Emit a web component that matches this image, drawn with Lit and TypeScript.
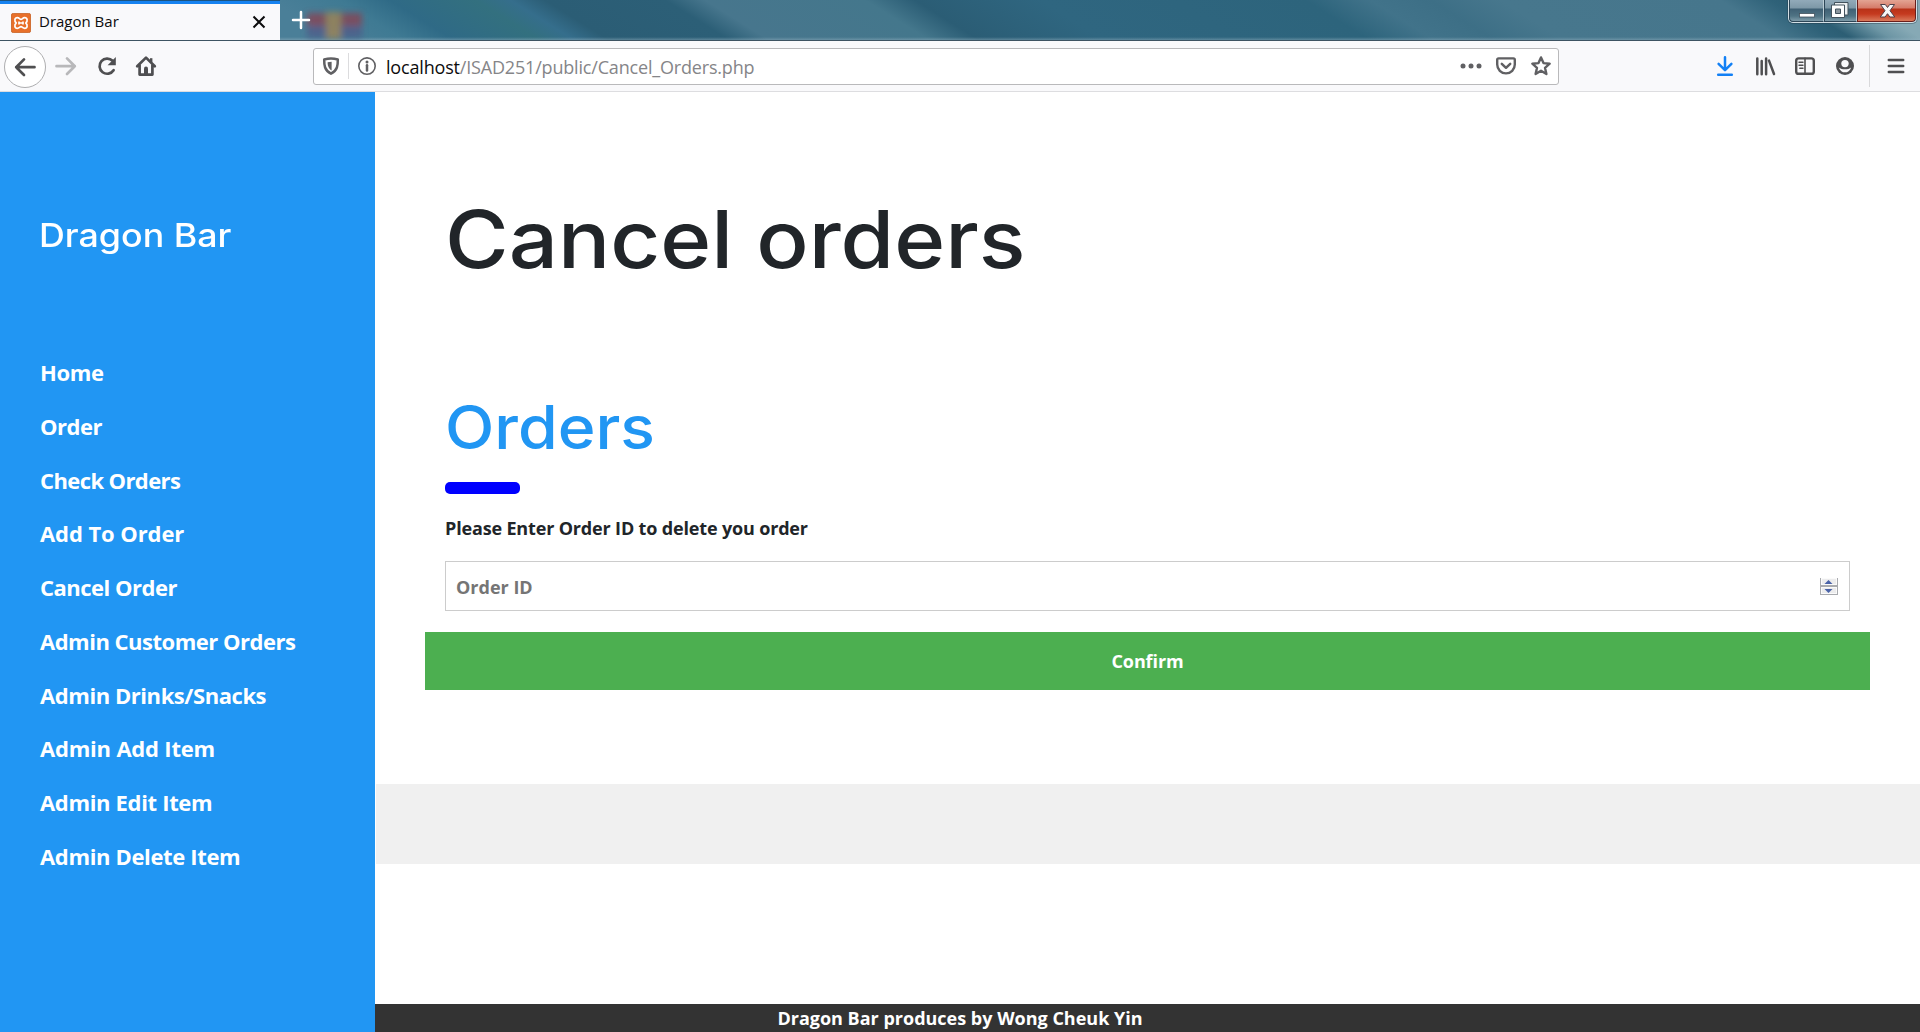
import { LitElement, html, css, svg, TemplateResult } from "lit";
import { customElement, property } from "lit/decorators.js";

const ICONS: Record<string, TemplateResult> = {
  back: svg`<path d="M21.5 12.2H3.2M11 4.4l-7.8 7.8 7.8 7.8" class="s w3"/>`,
  forward: svg`<path d="M2.5 12.2h18.3M13 4.4l7.8 7.8-7.8 7.8" class="s w3"/>`,
  reload: svg`<path d="M18.6 16.2A7.6 7.6 0 1 1 17.6 6.8" class="s w3"/><path d="M20.8 3v8.2h-8.2z" class="f"/>`,
  home: svg`<path d="M3.2 12.2 12 3.6l8.8 8.6M5.6 11v9.6h12.8V11" class="s w3 j"/><path d="M10 20v-5.6a2 2 0 0 1 4 0V20z" class="f"/><path d="M16 4.2h2.4v4H16z" class="f"/>`,
  shield: svg`<path d="M12 4.4c2.4 0 4.6.4 6.8 1.1.1 5.6-.3 11-6.8 14.2C5.500 16.500 5.100 11.100 5.200 5.500 7.400 4.800 9.600 4.400 12 4.400z" class="s w26 j"/><path d="M12.600 7.700c-1.400 0-2.700.2-4 .5.100 3.300.600 6.100 4 8.200z" class="f"/>`,
  info: svg`<circle cx="12" cy="12.100" r="8.200" class="s w16"/><circle cx="12" cy="8" r="1.500" class="f"/><path d="M12 11.200v5.400" class="s w26"/>`,
  dots: svg`<circle cx="4" cy="12" r="2.500" class="f"/><circle cx="12" cy="12" r="2.500" class="f"/><circle cx="20" cy="12" r="2.500" class="f"/>`,
  pocket: svg`<path d="M4.600 4.400h14.800a1.400 1.400 0 0 1 1.400 1.400v4.800a8.800 8.800 0 0 1-17.600 0V5.800a1.400 1.400 0 0 1 1.400-1.400z" class="s w24 j"/><path d="M7.800 9.800l4.200 4 4.200-4" class="s w26 j"/>`,
  star: svg`<path d="M12 3.400l2.500 5.700 6.200.600-4.700 4.100 1.400 6.200L12 16.800 6.600 20l1.400-6.200-4.700-4.100 6.200-.600z" class="s w24 j"/>`,
  download: svg`<path d="M12 3.200v12.600M5.600 9.800l6.400 6.400 6.400-6.400" class="s w26 j"/><path d="M5.200 20.800h13.600" class="s w26"/>`,
  library: svg`<path d="M4.300 4.400v15.800M8.700 7v13.200M13.100 4.400v15.800M16 6.600l5 13.400" class="s w26"/>`,
  sidebar: svg`<rect x="3.200" y="4.400" width="17.600" height="15.400" rx="2.400" class="s w24"/><path d="M12 4.400v15.400" class="s w16"/><path d="M6 8.200h4M6 11.200h4M6.800 14.200H10" class="s w14"/>`,
  account: svg`<circle cx="12" cy="12" r="9" class="f"/><circle cx="12" cy="9.600" r="3.700" fill="#f9f9fb"/><path d="M5.800 13.400c1.300 3.600 3.500 4.900 6.200 4.900s4.900-1.300 6.200-4.900c-1.600 1.300-3.700 1.900-6.200 1.900s-4.600-.600-6.200-1.900z" fill="#f9f9fb"/>`,
  menu: svg`<path d="M4.800 6.100h14.400M4.800 12.100h14.400M4.800 18.100h14.400" class="s w26"/>`,
  close: svg`<path d="M6.500 6.500l11 11M17.500 6.500l-11 11" class="s w2 b"/>`,
  plus: svg`<path d="M12 4v16M4 12h16" class="s w26"/>`,
};

@customElement("ui-icon")
class UiIcon extends LitElement {
  @property() name = "";
  static styles = css`
    :host { display: block; width: 24px; height: 24px; flex: none; }
    svg { display: block; width: 24px; height: 24px; fill: none; }
    .s { stroke: currentColor; stroke-linecap: round; stroke-width: 2; }
    .j { stroke-linejoin: round; }
    .b { stroke-linecap: butt; }
    .f { fill: currentColor; }
    .w14 { stroke-width: 1.4; }
    .w16 { stroke-width: 1.6; }
    .w2 { stroke-width: 2; }
    .w24 { stroke-width: 2.4; }
    .w26 { stroke-width: 2.5; }
    .w3 { stroke-width: 2.7; stroke-linejoin: round; }
  `;
  render() {
    return html`<svg viewBox="0 0 24 24">${ICONS[this.name]}</svg>`;
  }
}

@customElement("browser-chrome")
class BrowserChrome extends LitElement {
  static styles = css`
    :host { display: block; flex: none; font-family: "Open Sans", "Noto Sans", sans-serif; font-weight: 400; }
    .titlebar {
      position: relative; box-sizing: border-box; height: 41px; overflow: hidden; background: #2f657d;
      display: flex; align-items: flex-start; border-bottom: 1px solid #3d5362;
    }
    .glass {
      position: absolute; left: -60px; top: 0; width: 2100px; height: 40px;
      transform: skewX(58deg); transform-origin: 0 0;
      background: linear-gradient(90deg,
        #4a7f98 0, #4a7f98 330px, #3f7a93 400px, #2f6a86 450px, #33707f 535px, #356e8c 570px, #2b5d75 605px,
        #2c5f77 725px, #47768d 765px, #44778c 925px, #2b5d75 975px, #2f6680 1100px, #2d647c 1365px,
        #41738a 1430px, #3d6f86 1490px, #47778d 1560px, #46768c 1780px, #2f6279 1830px, #2c5e74 1850px,
        #6c95a4 1890px, #86a9b5 1920px, #86a9b5 2100px);
    }
    .haze { position: absolute; left: 0; right: 0; bottom: 0; height: 3px; background: linear-gradient(transparent, rgba(150, 180, 195, .45)); }
    .desktop { position: absolute; left: 298px; top: 4px; width: 72px; height: 36px; }
    .tab {
      position: relative; box-sizing: border-box; width: 280px; height: 41px; padding: 0 12px 0 11px;
      background: #f9f9fb; border-top: 1px solid #1c5480; display: flex; align-items: center;
    }
    .tab::before { content: ""; position: absolute; left: 0; right: 0; top: 0; height: 3px; background: #1682f0; }
    .tab .title { flex: 1; margin-left: 8px; font-size: 15px; line-height: 20px; color: #0c0c0d; }
    .fav { width: 20px; height: 20px; display: block; margin-top: 3px; }
    .tab ui-icon { margin-right: -3px; margin-top: 1px; color: #0c0c0d; }
    .new { position: relative; color: #fff; margin: 8px 0 0 9px; }
    .controls {
      position: relative; margin: 0 3px 0 auto; display: flex; box-sizing: border-box; width: 129px; height: 23px;
      border: 1px solid #d3dfe5; border-top: 0; border-radius: 0 0 5px 5px; overflow: hidden; box-shadow: 0 0 0 1px rgba(30, 50, 62, .35);
    }
    .ctl { display: block; border: 1px solid #2d4657; border-top: 0; box-sizing: border-box; height: 22px;
      background: linear-gradient(#92aab9 0, #7d98a7 8px, #3f6074 9px, #4f7384 16px, #87a4b1 22px); }
    .ctl svg { display: block; width: 100%; height: 21px; }
    .min { width: 35px; border-right-color: #bccdd5; border-bottom-left-radius: 4px; }
    .max { width: 33px; border-right-color: #bccdd5; }
    .cls { flex: 1; border-color: #6a1f1c; border-bottom-right-radius: 4px;
      background: linear-gradient(#e3a493 0, #d57b69 8px, #b83218 9px, #c53a1f 14px, #dc8263 22px); }
    .toolbar {
      box-sizing: border-box; height: 51px; background: #f9f9fb; border-bottom: 1px solid #dddde0;
      display: flex; align-items: center; padding-left: 4px; color: #4f4f51;
    }
    .round {
      box-sizing: border-box; width: 42px; height: 42px; border: 1px solid #aeaeb0; border-radius: 50%; background: #fff;
      display: flex; align-items: center; justify-content: center; margin-top: 1px;
    }
    .m8 { margin-left: 8px; } .m17 { margin-left: 17px; } .m15 { margin-left: 15px; } .m16 { margin-left: 16px; }
    .m11 { margin-left: 11px; }
    .faint { color: #b8b8ba; }
    .urlbar {
      box-sizing: border-box; width: 1246px; height: 37px; margin-left: 155px; background: #fff; border: 1px solid #b9b9bb;
      border-radius: 3px; display: flex; align-items: center; padding: 0 5px; color: #606063;
    }
    .sep { width: 1px; height: 26px; background: #dcdcde; margin: 0 6px 0 5px; }
    .url { flex: 1; margin-left: 7px; font-size: 18px; line-height: 26px; letter-spacing: -.18px; color: #858588; margin-top: 2px; }
    .url b { font-weight: 400; color: #0c0c0d; }
    .dl { margin-left: 154px; color: #1280f5; }
    .rule { width: 1px; height: 42px; margin: 0 14px 0 12px; background: #d9d9db; }
  `;
  render() {
    return html`
      <div class="titlebar">
        <div class="glass"></div>
        <div class="haze"></div>
        <svg class="desktop" viewBox="0 0 72 36">
          <defs><filter id="soft" x="-20%" y="-30%" width="140%" height="160%"><feGaussianBlur stdDeviation="3" /></filter></defs>
          <g filter="url(#soft)" opacity=".75">
            <rect x="9" y="9" width="55" height="13" fill="#8c3f50" />
            <rect x="9" y="22" width="55" height="12" fill="#4f5a88" />
            <rect x="28" y="8" width="15" height="27" fill="#a58450" />
          </g>
        </svg>
        <div class="tab">
          <svg class="fav" viewBox="0 0 20 20">
            <rect x=".4" y=".4" width="19.2" height="19.2" rx="1.8" fill="#e8702a" stroke="#c45a1c" stroke-width=".8" />
            <path d="M6.300 4.700C3.600 4.700 3 8.200 5.200 10 3 11.800 3.600 15.300 6.300 15.300c2 0 2.300-1.600 3.700-1.600s1.700 1.600 3.700 1.600c2.700 0 3.300-3.500 1.100-5.300 2.200-1.800 1.600-5.300-1.100-5.300-2 0-2.300 1.600-3.700 1.600S8.300 4.700 6.300 4.700zM8 8.500v3M12 8.500v3M8 10h4" fill="none" stroke="#fff" stroke-width="1.700" stroke-linejoin="round" />
          </svg>
          <span class="title">Dragon Bar</span>
          <ui-icon name="close"></ui-icon>
        </div>
        <ui-icon class="new" name="plus"></ui-icon>
        <div class="controls">
          <span class="ctl min"><svg viewBox="0 0 33 21"><rect x="9.500" y="13.500" width="15" height="3.500" fill="#fff" stroke="#43525d" stroke-width=".8" /></svg></span>
          <span class="ctl max"><svg viewBox="0 0 31 21"><path d="M9.500 2.500h13.500v12.500h-13.500z" fill="#eceff1" stroke="#43525d" /><path d="M6.500 5h13v12.500h-13z" fill="#fff" stroke="#43525d" /><path d="M10.500 9h5v4.500h-5z" fill="#8b969e" stroke="#43525d" /></svg></span>
          <span class="ctl cls"><svg viewBox="0 0 57 21"><path d="M22.500 4.500h4.800l2.200 3 2.200-3h4.800l-4.500 6.200 4.800 6.300h-4.900l-2.400-3.300-2.400 3.300h-4.900l4.800-6.300z" fill="#f7f7f7" stroke="#4c3f49" /></svg></span>
        </div>
      </div>
      <div class="toolbar">
        <span class="round"><ui-icon name="back"></ui-icon></span>
        <ui-icon class="m8 faint" name="forward"></ui-icon>
        <ui-icon class="m17" name="reload"></ui-icon>
        <ui-icon class="m15" name="home"></ui-icon>
        <div class="urlbar">
          <ui-icon name="shield"></ui-icon>
          <span class="sep"></span>
          <ui-icon name="info"></ui-icon>
          <span class="url"><b>localhost</b>/ISAD251/public/Cancel_Orders.php</span>
          <ui-icon name="dots"></ui-icon>
          <ui-icon class="m11" name="pocket"></ui-icon>
          <ui-icon class="m11" name="star"></ui-icon>
        </div>
        <ui-icon class="dl" name="download"></ui-icon>
        <ui-icon class="m16" name="library"></ui-icon>
        <ui-icon class="m16" name="sidebar"></ui-icon>
        <ui-icon class="m16" name="account"></ui-icon>
        <span class="rule"></span>
        <ui-icon name="menu"></ui-icon>
      </div>
    `;
  }
}

/** Sidebar links with their letter tracking in pixels. */
const LINKS: [string, number][] = [
  ["Home", -0.35], ["Order", -0.5], ["Check Orders", -0.6], ["Add To Order", -0.08], ["Cancel Order", -0.5],
  ["Admin Customer Orders", -0.5], ["Admin Drinks/Snacks", -0.44], ["Admin Add Item", -0.2],
  ["Admin Edit Item", -0.33], ["Admin Delete Item", -0.35],
];

@customElement("app-root")
class AppRoot extends LitElement {
  static styles = css`
    :host {
      display: flex; flex-direction: column; height: 1032px; background: #fff; overflow: hidden;
      font: 700 18px/27px "Open Sans", "Noto Sans", sans-serif; color: #212529;
    }
    .page { flex: 1; display: flex; min-height: 0; }
    .side { box-sizing: border-box; width: 375px; flex: none; background: #2196f3; color: #fff; padding: 123px 0 0 40px; }
    .brand { margin: 0 0 91px -1px; font: 450 33px/40px Inter, sans-serif; transform: scaleX(1.085); transform-origin: 0 0; }
    .nav { display: flex; flex-direction: column; }
    .nav a { font-size: 22px; line-height: 53.75px; color: #fff; }
    .main { flex: 1; display: flex; flex-direction: column; min-width: 0; }
    .content { padding: 97px 70px 0; height: 692px; box-sizing: border-box; }
    h1, h2 { margin: 0; font-family: Inter, sans-serif; font-weight: 540; transform-origin: 0 0; }
    h1 { font-size: 80px; line-height: 100px; transform: scaleX(1.085); }
    h2 { margin-top: 100px; font-size: 60px; line-height: 76px; transform: scaleX(1.072); color: #2196f3; }
    .bar { width: 75px; height: 12px; margin-top: 17px; border-radius: 5px; background: #00f; }
    .label { margin: 21px 0 0; letter-spacing: -.16px; }
    .field {
      box-sizing: border-box; height: 50px; margin-top: 19px; border: 1px solid #ccc; padding: 0 11px 0 10px;
      display: flex; align-items: center; justify-content: space-between; color: #757575;
    }
    .field span { margin-top: 2px; }
    .spin { width: 18px; height: 17px; display: block; margin-top: 1px; }
    .confirm {
      height: 58px; margin: 21px -20px 0; background: #4caf50; color: #fff; display: flex; align-items: center; justify-content: center;
      letter-spacing: -.1px;
    }
    .band { height: 80px; margin-left: 1px; background: #f0f0f0; }
    .footer { height: 28px; margin-top: auto; padding-right: 375px; background: #333; color: #fff; line-height: 28px; text-align: center; }
  `;
  render() {
    return html`
      <browser-chrome></browser-chrome>
      <div class="page">
        <aside class="side">
          <h3 class="brand">Dragon Bar</h3>
          <nav class="nav">${LINKS.map(([label, tracking]) => html`<a style="letter-spacing:${tracking}px">${label}</a>`)}</nav>
        </aside>
        <main class="main">
          <section class="content">
            <h1>Cancel orders</h1>
            <h2>Orders</h2>
            <div class="bar"></div>
            <p class="label">Please Enter Order ID to delete you order</p>
            <div class="field">
              <span>Order ID</span>
              <svg class="spin" viewBox="0 0 18 17">
                <path d="M0 0h18v17H0z" fill="#a9abaf" />
                <path d="M1 0h16v7H1zM1 9h16v7H1z" fill="#fbfbfb" />
                <path d="M2 1h14v5H2zM2 10h14v5H2z" fill="#ececed" />
                <path d="M8.500 2l4 4h-8zM8.500 15l-4-4h8z" fill="#4a63a8" />
              </svg>
            </div>
            <div class="confirm">Confirm</div>
          </section>
          <div class="band"></div>
          <footer class="footer">Dragon Bar produces by Wong Cheuk Yin</footer>
        </main>
      </div>
    `;
  }
}
